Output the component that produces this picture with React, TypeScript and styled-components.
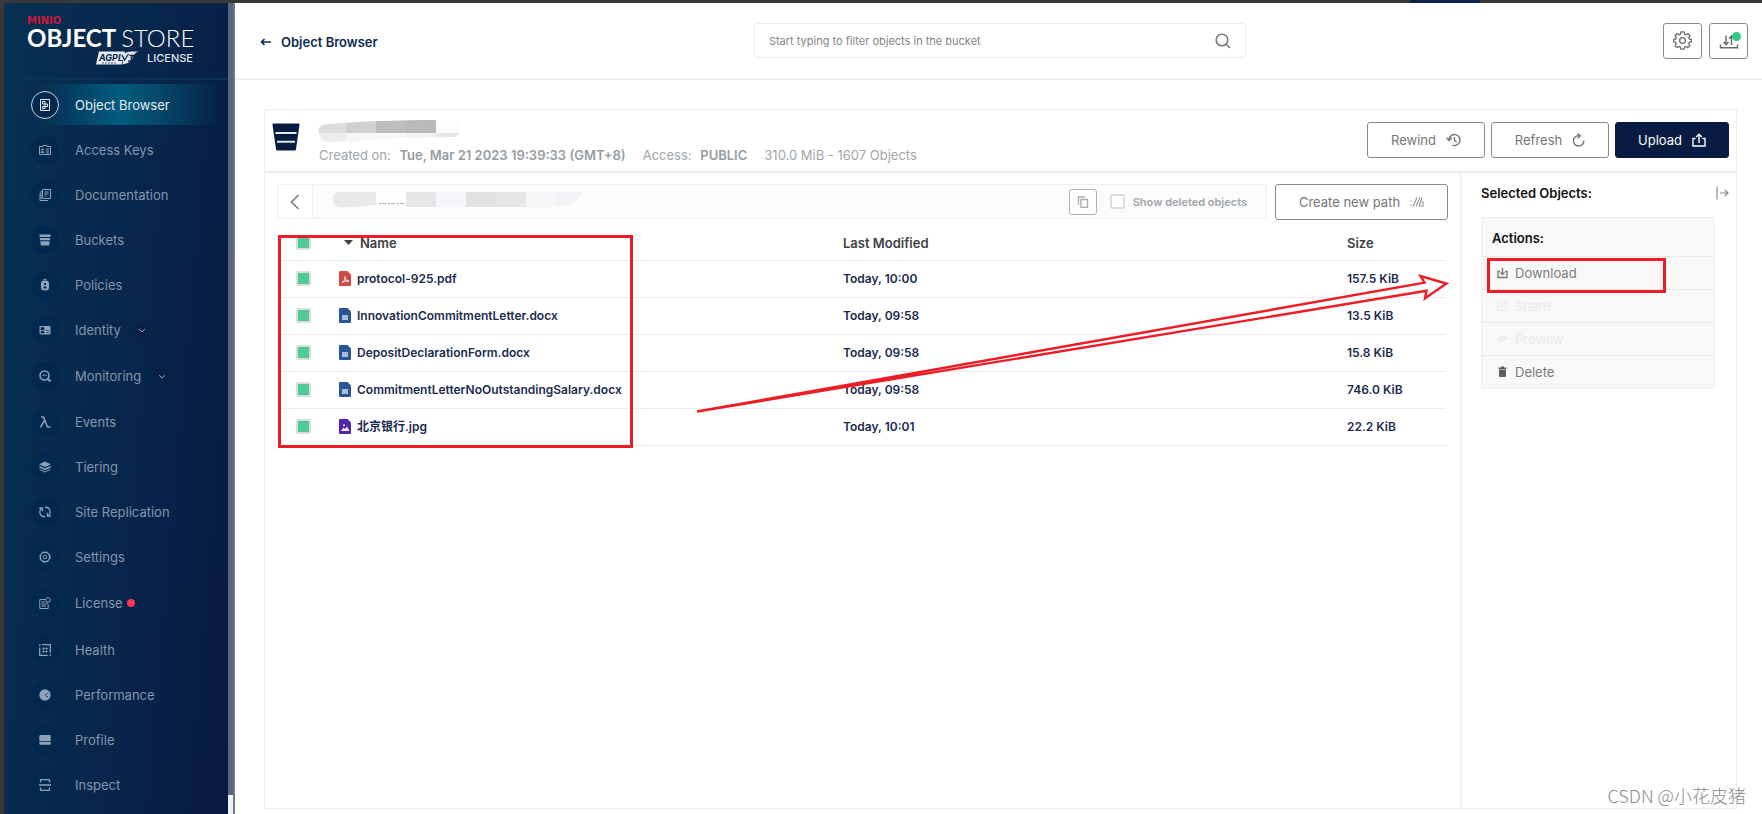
import React from "react";
import styled, { createGlobalStyle } from "styled-components";

const sans = `Inter, "Noto Sans CJK SC", sans-serif`;
const red = "#ee1c25";

const GlobalStyle = createGlobalStyle`
  *, *::before, *::after { box-sizing: border-box; }
  body { margin: 0; font-family: ${sans}; font-size: 13px; line-height: 16px; background: #fff; }
  button, input { font: inherit; }
  h1, h2, p, ul { margin: 0; padding: 0; font-size: inherit; font-weight: inherit; }
  a { color: inherit; text-decoration: none; }
`;

const Frame = styled.div`
  position: relative;
  display: flex;
  min-height: 100vh;
  padding: 3px 0 0 4px;
  background:
    linear-gradient(90deg, transparent 80%, #13214f 80% 84%, transparent 84%) 0 0 / 100% 3px no-repeat,
    #383838;
`;

/* ---------- sidebar ---------- */

const Sidebar = styled.aside`
  flex: none;
  width: 224px;
  background: linear-gradient(95deg, #073153, #07264c 50%, #081a42);
  color: #8396ab;
`;

const LogoLink = styled.a`
  display: block;
  height: 77px;
  padding: 12px 0 0 23px;
  border-bottom: 2px solid #0b3158;
  color: #fff;
  font-family: Lato, sans-serif;
`;

const Brand = styled.span`
  display: block;
  height: 12px;
  color: #c8193c;
  font: bold 10px/12px "DejaVu Sans", sans-serif;
`;

const Product = styled.span`
  display: flex;
  gap: 5px;
  font-size: 24px;
  font-weight: 300;
  line-height: 22px;
  strong { font-weight: 700; }
`;

const Licensing = styled.span`
  display: flex;
  align-items: center;
  gap: 8px;
  margin: 1px 0 0 69px;
  color: #dfe5ec;
  font: 500 11px/16px ${sans};
`;

const Menu = styled.ul`
  list-style: none;
  padding-top: 2px;
`;

const MenuItem = styled.li<{ $height: number }>`
  display: flex;
  align-items: center;
  height: ${(p) => p.$height}px;
`;

const MenuLink = styled.a<{ $active?: boolean }>`
  display: flex;
  align-items: center;
  gap: 16px;
  height: 41px;
  margin-left: 27px;
  flex: ${(p) => (p.$active ? "1" : "none")};
  background: ${(p) =>
    p.$active ? "linear-gradient(90deg, transparent 4%, #015c7f 45%, #044a6c 62%, transparent 96%)" : "none"};
  color: ${(p) => (p.$active ? "#e3edf3" : "inherit")};
`;

const IconCircle = styled.span<{ $active?: boolean }>`
  display: grid;
  place-items: center;
  width: 28px;
  height: 28px;
  border-radius: 50%;
  background: #01284e;
  border: 1px solid ${(p) => (p.$active ? "#c8d3de" : "#04264a")};
  color: ${(p) => (p.$active ? "#e3edf3" : "#8fa2b8")};
`;

const Expand = styled.button`
  display: grid;
  place-items: center;
  width: 14px;
  height: 14px;
  margin-left: 14px;
  padding: 0;
  border: 0;
  background: #0a1f45;
  color: #8fa2b8;
`;

const Alert = styled.span`
  width: 8px;
  height: 8px;
  margin-left: 4px;
  border-radius: 50%;
  background: #fb3552;
`;

const ScrollTrack = styled.div`
  flex: none;
  display: flex;
  align-items: flex-end;
  width: 7px;
  background: #5b637e;
  border-right: 2px solid #6f7790;
`;

const ScrollEnd = styled.div`
  width: 100%;
  height: 19px;
  background: #f2f2f4;
`;

/* ---------- header ---------- */

const Main = styled.main`
  flex: 1;
  min-width: 0;
  display: flex;
  flex-direction: column;
  background: #fff;
`;

const TopBar = styled.header`
  display: grid;
  grid-template-columns: 60fr 492px 61fr;
  align-items: center;
  height: 77px;
  padding: 0 14px 0 25px;
  border-bottom: 2px solid #efefef;
`;

const BackLink = styled.a`
  display: flex;
  align-items: center;
  gap: 9px;
  color: #0a2a4d;
  font-weight: 600;
  padding-top: 2px;
`;

const SearchBox = styled.label`
  display: flex;
  align-items: center;
  height: 35px;
  padding: 0 14px;
  border: 1px solid #eaedee;
  border-radius: 3px;
  color: #7b7b7b;
`;

const SearchInput = styled.input`
  flex: 1;
  min-width: 0;
  padding: 0;
  border: 0;
  outline: 0;
  background: none;
  font-size: 11px;
  &::placeholder { color: #858585; opacity: 1; }
`;

const IconButtons = styled.div`
  display: flex;
  justify-content: flex-end;
  gap: 7px;
`;

const SquareButton = styled.button`
  position: relative;
  display: grid;
  place-items: center;
  width: 39px;
  height: 36px;
  padding: 0;
  border: 1px solid #8b8b8b;
  border-radius: 3px;
  background: #fff;
  color: #6c6c6c;
`;

const Badge = styled.span`
  position: absolute;
  top: 8px;
  right: 6px;
  width: 9px;
  height: 9px;
  border-radius: 50%;
  background: #33c886;
`;

/* ---------- bucket panel ---------- */

const Panel = styled.section`
  flex: 1;
  display: flex;
  flex-direction: column;
  margin: 29px 25px 5px 29px;
  border: 1px solid #eeeeee;
`;

const BucketHeader = styled.div`
  display: flex;
  align-items: flex-start;
  height: 63px;
  padding: 10px 7px 0;
  border-bottom: 2px solid #eaeaea;
`;

const BucketGlyph = styled.span`
  display: grid;
  padding-top: 3px;
`;

const BucketInfo = styled.div`
  flex: 1;
  padding-left: 19px;
`;

const Facts = styled.p`
  display: flex;
  gap: 17px;
  margin-top: 2px;
  color: #a0a5aa;
  strong { margin-left: 5px; font-weight: 600; color: #969ca2; }
`;

const Actions = styled.div`
  display: flex;
  gap: 6px;
  padding-top: 2px;
`;

const Button = styled.button<{ $primary?: boolean; $width: number }>`
  display: flex;
  align-items: center;
  justify-content: center;
  gap: 10px;
  width: ${(p) => p.$width}px;
  height: 36px;
  padding: 0;
  border: 1px solid ${(p) => (p.$primary ? "#081c42" : "#8b8b8b")};
  border-radius: 3px;
  background: ${(p) => (p.$primary ? "#081c42" : "#fff")};
  color: ${(p) => (p.$primary ? "#fff" : "#767676")};
`;

const Columns = styled.div`
  flex: 1;
  display: flex;
`;

const ListArea = styled.div`
  position: relative;
  flex: 1;
  min-width: 0;
  padding: 11px 12px;
`;

const PathRow = styled.div`
  display: flex;
  gap: 8px;
`;

const PathBar = styled.div`
  flex: 1;
  display: flex;
  align-items: center;
  height: 35px;
  padding-right: 19px;
  border: 1px solid #f1f1f1;
  background: #fcfcfc;
`;

const BackButton = styled.button`
  display: grid;
  place-items: center;
  width: 35px;
  height: 33px;
  padding: 0;
  border: 0;
  border-right: 1px solid #f1f1f1;
  background: #fff;
  color: #7b7b7b;
`;

const PathName = styled.div`
  flex: 1;
  padding-left: 20px;
`;

const CopyButton = styled.button`
  display: grid;
  place-items: center;
  width: 28px;
  height: 26px;
  margin-right: 13px;
  padding: 0;
  border: 1px solid #aab4ba;
  border-radius: 3px;
  background: #fff;
  color: #a9adb0;
`;

const Deleted = styled.label`
  display: flex;
  align-items: center;
  gap: 8px;
  color: #a0a5aa;
  font-size: 11px;
  font-weight: 600;
`;

const Tick = styled.input.attrs({ type: "checkbox" })`
  appearance: none;
  display: block;
  width: 15px;
  height: 15px;
  margin: 0;
  border: 2px solid #dcdcdc;
  border-radius: 2px;
  background: #fff;
  &:checked { background: #4ccb92; }
`;

const Table = styled.table`
  width: calc(100% - 4px);
  margin: 3px 2px 0;
  border-collapse: collapse;
  table-layout: fixed;
  color: #1b2b50;
  font-size: 12px;
  font-weight: 600;
  th, td { height: 37px; padding: 0; border-bottom: 1px solid #ebebeb; text-align: left; }
  th { padding-top: 3px; color: #404143; font-size: 13px; font-weight: 600; }
  th:first-child, td:first-child { width: 60px; padding-left: 17px; }
  th:last-child, td:last-child { width: 99px; }
`;

const FileName = styled.a`
  display: flex;
  align-items: center;
  gap: 6px;
`;

const SortButton = styled.button`
  display: flex;
  align-items: center;
  gap: 7px;
  padding: 0 0 0 5px;
  border: 0;
  background: none;
  color: inherit;
`;

const SidePanel = styled.aside`
  flex: none;
  width: 276px;
  padding: 10px 7px 0 19px;
  border-left: 2px solid #f4f4f4;
`;

const SideHead = styled.div`
  display: flex;
  align-items: center;
  justify-content: space-between;
  height: 20px;
  color: #111;
  h2 { font-weight: 600; }
`;

const CloseButton = styled.button`
  display: grid;
  padding: 0;
  border: 0;
  background: none;
  color: #8b8b8b;
`;

const ActionBox = styled.div`
  margin: 14px 14px 0 0;
  border: 1px solid #f1f1f1;
  border-radius: 2px;
  background: #f8f8f8;
`;

const ActionTitle = styled.h2`
  height: 38px;
  padding: 0 10px;
  color: #111;
  font-weight: 600;
  line-height: 40px;
`;

const ActionSlot = styled.div`
  position: relative;
  border-top: 1px solid #e9e9e9;
`;

const ActionButton = styled.button`
  display: flex;
  align-items: center;
  gap: 7px;
  width: 100%;
  height: 32px;
  padding: 0 15px;
  border: 0;
  background: none;
  color: #7b7b7b;
  &:disabled { color: #ebebeb; }
`;

/* ---------- annotations over the page ---------- */

const ListMark = styled.div`
  position: absolute;
  top: 62px;
  left: 13px;
  width: 355px;
  height: 213px;
  border: 3px solid ${red};
  pointer-events: none;
`;

const DownloadMark = styled.div`
  position: absolute;
  top: 1px;
  left: 5px;
  width: 179px;
  height: 35px;
  border: 3px solid ${red};
  pointer-events: none;
  z-index: 1;
`;

const ArrowMark = styled.svg`
  position: absolute;
  top: 100px;
  right: 11px;
  pointer-events: none;
`;

const Watermark = styled.span`
  position: absolute;
  right: 16px;
  bottom: 7px;
  color: #8c8c8c;
  font: 300 18px/24px "Noto Sans CJK SC", sans-serif;
`;

/* ---------- icons ---------- */

const menuIcons: Record<string, React.ReactNode> = {
  browser: (
    <g fill="none" stroke="currentColor">
      <path d="M1.500 .5h9v11h-9z" />
      <path d="M3.500 2.500h2.500v2.500h-2.500zM6 5h2.500v2.500H6zM3.500 7.500h2.500v2h-2.500z" />
    </g>
  ),
  keys: (
    <g fill="none" stroke="currentColor">
      <path d="M.5 2.500h3.500v-1h4v1h3.500v8H.5z" />
      <path d="M2 8.500c0-2 3-2 3 0zM2.800 5h1.400v1H2.800zM7 5h3M7 7h3M7 9h3" />
    </g>
  ),
  docs: (
    <g fill="none" stroke="currentColor">
      <path d="M3.500 .5h8v9h-8zM3.500 2.500h-1.500v7.500M1 4v7.500h8M5.500 3h4M5.500 5h4M5.500 7h2" />
    </g>
  ),
  bucket: (
    <path fill="currentColor" d="M.3.500h11.400L11.400 3H.6zM.8 4h10.400l-.3 2.300H1.100zM1.300 7.300h9.400l-.6 4.200H1.900z" />
  ),
  policy: (
    <g>
      <rect x="2" y="1.500" width="8" height="10" rx="3" fill="currentColor" />
      <path d="M4.500 .5h3" stroke="currentColor" />
      <path d="M5 4h2v2H5zM4.500 7.500h3v2h-3z" fill="#01284e" />
    </g>
  ),
  identity: (
    <g>
      <rect x=".5" y="2" width="11" height="8.500" rx="1" fill="currentColor" />
      <path d="M2 3.500h3v2.500H2zM2 7.500h3v1.500H2zM7 6.500h3M7 8.500h3" fill="#01284e" stroke="#01284e" strokeWidth=".6" />
    </g>
  ),
  monitor: (
    <g fill="none" stroke="currentColor">
      <circle cx="5.500" cy="5.500" r="4.500" strokeWidth="1.600" />
      <path d="M8.500 8.500l3 3" strokeWidth="2" />
      <path d="M3.500 6l1.300-1.500 1.400 1.500L8 4.500" strokeWidth=".9" />
    </g>
  ),
  lambda: <path d="M2 .9h2.500l4 10.200H11.500M5.500 4.500L1.500 11.400" fill="none" stroke="currentColor" strokeWidth="1.500" />,
  tiers: (
    <g>
      <path d="M6 .5l5.800 2.700L6 6 .2 3.200z" fill="currentColor" />
      <path d="M.4 4.700L6 7.400l5.600-2.700v1.800L6 9.200.4 6.500z" fill="currentColor" />
      <path d="M.5 8.400L6 11l5.500-2.600" fill="none" stroke="currentColor" />
    </g>
  ),
  replicate: (
    <g fill="none" stroke="currentColor" strokeWidth="1.300">
      <path d="M4.500 11A5 5 0 0 1 2.500 2.500M7.500 1A5 5 0 0 1 9.500 9.500" />
      <path d="M.3 2h3.200v3.200M11.700 10H8.500V6.800M6 1.500h2M4 10.500h2" />
    </g>
  ),
  gear: (
    <g fill="none" stroke="currentColor">
      <circle cx="6" cy="6" r="4.600" strokeWidth="1.300" />
      <circle cx="6" cy="6" r="5.300" strokeDasharray="2 2.200" />
      <circle cx="6" cy="6" r="1.800" />
    </g>
  ),
  license: (
    <g fill="none" stroke="currentColor">
      <path d="M7 2.500H.8v9h8.400V7" />
      <circle cx="9" cy="3" r="2.300" />
      <path d="M2.500 5h3.500M2.500 7h4.500M2.500 9h4.500M8 5v2.500" />
    </g>
  ),
  health: (
    <g fill="none" stroke="currentColor">
      <path d="M.7 3.500v7.800h8M3 .7h8.300v8" strokeWidth="1.300" />
      <path d="M3 4.500h6M3 7.500h6M4.500 3v6M7.500 3v6" strokeWidth=".7" />
      <path d="M0 1h1.500M10.500 11h1.500" strokeWidth="1.500" />
    </g>
  ),
  performance: (
    <g>
      <circle cx="6" cy="6" r="5.700" fill="currentColor" />
      <path d="M5.500 6.500l4-2.500M7 7.500h2" stroke="#01284e" strokeWidth=".7" />
    </g>
  ),
  profile: (
    <g fill="currentColor">
      <rect x=".3" y="1" width="11.400" height="6.300" rx="1" />
      <path d="M.3 8h11.400v1.700a1 1 0 0 1-1 1H1.300a1 1 0 0 1-1-1z" />
    </g>
  ),
  inspect: (
    <g fill="none" stroke="currentColor" strokeWidth="1.300">
      <path d="M1.500 3.500v-2a1 1 0 0 1 1-1h7a1 1 0 0 1 1 1v2M1.500 8.500v2a1 1 0 0 0 1 1h7a1 1 0 0 0 1-1v-2M0 6h12" />
    </g>
  ),
};

const MenuIcon = ({ name }: { name: string }) => (
  <svg width="12" height="12" viewBox="0 0 12 12" aria-hidden="true">
    {menuIcons[name]}
  </svg>
);

const AgplMark = () => (
  <svg width="43" height="14" viewBox="0 0 43 14" aria-hidden="true">
    <path d="M3 .5h26L25.500 13.500H0z" fill="#e8ecf1" />
    <path d="M28 2.500c4-2.500 9-2 14.500-2-3 1-4 2-5 4.500-1.500 5-5 7.500-11 8.500z" fill="#dfe5ec" />
    <text x="3" y="10" fontFamily="Inter, sans-serif" fontSize="9" fontWeight="700" fontStyle="italic" fill="#0a2348">
      AGPL
    </text>
    <path d="M26 4l2.500 5 4-6M33.500 4.500h4l-2.500 2.500c2 1 0 3.500-3 3" fill="none" stroke="#0a2348" strokeWidth="1.300" />
    <path d="M6 12h15" stroke="#0a2348" strokeWidth=".7" strokeDasharray="2 1" />
  </svg>
);

const ArrowLeft = () => (
  <svg width="12" height="10" viewBox="0 0 12 10" fill="none" stroke="currentColor" strokeWidth="1.600" aria-hidden="true">
    <path d="M11 5H1.500M4.500 2L1.500 5l3 3" />
  </svg>
);

const SearchIcon = () => (
  <svg width="16" height="16" viewBox="0 0 16 16" fill="none" stroke="currentColor" strokeWidth="1.600" aria-hidden="true">
    <circle cx="7" cy="7" r="5.800" />
    <path d="M11.200 11.200l3.800 3.800" />
  </svg>
);

const GearIcon = () => (
  <svg width="19" height="19" viewBox="0 0 20 20" fill="none" stroke="currentColor" strokeWidth="1.400" strokeLinejoin="round" aria-hidden="true">
    <path d="M8.300 1h3.400l.5 2.300 1.500.7 2-1.300 2.200 2.300-1.300 2 .7 1.400 2.100.4v2.500l-2.200.6-.6 1.500 1.200 2-2.100 2.100-2-1.200-1.500.6-.5 2.200H8.300l-.5-2.200-1.500-.6-2 1.200-2.100-2.100 1.200-2-.6-1.500-2.200-.6V8.800l2.200-.4.6-1.400-1.200-2 2.100-2.300 2 1.300 1.500-.7z" />
    <circle cx="10" cy="10" r="3" />
  </svg>
);

const TransferIcon = () => (
  <svg width="20" height="16" viewBox="0 0 20 16" fill="none" stroke="currentColor" strokeWidth="1.500" aria-hidden="true">
    <path d="M1.500 11.500v3.200h17v-3.200M7 2.500v9M4.500 9L7 11.700 9.500 9M12.500 12V3.500M10 5.800L12.500 3 15 5.800" />
  </svg>
);

const BucketIcon = () => (
  <svg width="28" height="28" viewBox="0 0 28 28" aria-hidden="true">
    <path d="M1.500.5h25a1 1 0 0 1 1 1.200L24 26.300a1.500 1.500 0 0 1-1.500 1.200h-17A1.500 1.500 0 0 1 4 26.300L.5 1.700A1 1 0 0 1 1.500.5z" fill="#081c42" />
    <path d="M3.500 10h21M5 18.700h18" stroke="#e3e7ec" strokeWidth="1.900" />
  </svg>
);

const NameMosaic = () => (
  <svg width="141" height="22" viewBox="0 0 141 22" aria-hidden="true">
    <clipPath id="nameShape">
      <path d="M0 9Q1 4 9 4L45 1.500 100 0h40v14l-4 3-60 1-40 3Q16 22 10 22 1 21 0 14z" />
    </clipPath>
    <g clipPath="url(#nameShape)">
      <path fill="#dddddb" d="M0 0h27v13H0z" />
      <path fill="#d0d0d0" d="M27 0h30v13H27z" />
      <path fill="#bdbdbd" d="M57 0h30v13H57z" />
      <path fill="#bababa" d="M87 0h30v13H87z" />
      <path fill="#fdfdfd" d="M117 0h24v13h-24z" />
      <path fill="#ebeeed" d="M0 13h27v9H0z" />
      <path fill="#f5f6f7" d="M27 13h60v9H27z" />
      <path fill="#f0f2f4" d="M87 13h30v9H87z" />
      <path fill="#e4e8eb" d="M117 13h24v9h-24z" />
    </g>
  </svg>
);

const PathMosaic = () => (
  <svg width="248" height="16" viewBox="0 0 248 16" aria-hidden="true">
    <clipPath id="pathShape">
      <path d="M0 7Q0 0 7 0h241q-1 11-18 14l-12 1H73V11L43 13Q14 16 6 15 0 14 0 7z" />
    </clipPath>
    <g clipPath="url(#pathShape)">
      <path fill="#e8e9eb" d="M0 0h43v16H0z" />
      <path fill="#fefefe" d="M43 0h30v16H43z" />
      <path fill="#e6e7e9" d="M73 0h30v16H73z" />
      <path fill="#f5f6f9" d="M103 0h30v16h-30z" />
      <path fill="#e1e2e3" d="M133 0h30v16h-30z" />
      <path fill="#e5e6e8" d="M163 0h30v16h-30z" />
      <path fill="#f7f7f9" d="M193 0h30v16h-30z" />
      <path fill="#f2f3f6" d="M223 0h25v16h-25z" />
    </g>
    <path d="M46 11.500h26" stroke="#a9b3b9" strokeDasharray="2 1 4 2" />
  </svg>
);

const RewindIcon = () => (
  <svg width="15" height="14" viewBox="0 0 15 14" fill="none" stroke="currentColor" strokeWidth="1.400" aria-hidden="true">
    <path d="M3 6.500a5.500 5.500 0 1 1 3.500 5.700M.5 4.800L3 7.500l2.800-2.700M8.500 4v3.500l2.200 1.700" />
  </svg>
);

const RefreshIcon = () => (
  <svg width="13" height="14" viewBox="0 0 13 14" fill="none" stroke="currentColor" strokeWidth="1.400" aria-hidden="true">
    <path d="M11.800 7.500A5.200 5.200 0 1 1 7.500 2.700M5.500.6l2.800 2.200-2.500 2.500" />
  </svg>
);

const UploadIcon = () => (
  <svg width="14" height="14" viewBox="0 0 14 14" fill="none" stroke="currentColor" strokeWidth="1.400" aria-hidden="true">
    <path d="M3.500 5.500H1v7.500h12V5.500h-2.500M7 10V1.500M4.200 4L7 1.200 9.800 4" />
  </svg>
);

const NewPathIcon = () => (
  <svg width="14" height="10" viewBox="0 0 14 10" fill="none" stroke="#9a9a9a" aria-hidden="true">
    <path d="M1 3.500v1.200M1 7.800V9M3 9.500L7 .5M6 9.500L10 .5M9 9.500L12 .5M10 5h3v4H9.500" strokeWidth="1.200" />
  </svg>
);

const CloseIcon = () => (
  <svg width="13" height="14" viewBox="0 0 13 14" fill="none" stroke="currentColor" strokeWidth="1.200" aria-hidden="true">
    <path d="M1 .5v13M4 7h8M9 4l3 3-3 3" />
  </svg>
);

const fileColors = { pdf: "#d04a48", docx: "#2b5599", jpg: "#5127a8" };

const FileIcon = ({ kind }: { kind: keyof typeof fileColors }) => (
  <svg width="12" height="15" viewBox="0 0 12 15" aria-hidden="true">
    <path d="M1 0h7.500L12 3.500V14a1 1 0 0 1-1 1H1a1 1 0 0 1-1-1V1a1 1 0 0 1 1-1z" fill={fileColors[kind]} />
    {kind === "pdf" && (
      <path d="M3 11.500c2.500-1 3.500-4 3-6 0 3 1.500 4.500 4 4.500-3-.5-5 .5-7 1.500z" fill="none" stroke="#fff" strokeWidth=".9" />
    )}
    {kind === "docx" && <path d="M3 7h6v5H3z" fill="#a9bddd" />}
    {kind === "jpg" && <path d="M2 12l2.500-3.500L6 10l2-2.500 2.500 4.500zM4 5.500h2v1.500H4z" fill="#efe9fa" />}
  </svg>
);

const actionIcons = {
  Download: (
    <g fill="none" stroke="currentColor" strokeWidth="1.400">
      <path d="M3 4.500H1v6h9v-6H8M5.500 1v6.500M3.500 5.500l2 2 2-2" />
    </g>
  ),
  Share: (
    <g fill="none" stroke="currentColor" strokeWidth="1.200">
      <path d="M5 1.500H1v9h9V7M4 7.500C4 5 6 3.500 9.500 3.500M7.500 1l2.500 2.500L7.500 6" />
    </g>
  ),
  Preview: (
    <g>
      <path d="M.5 5.500Q5.500 0 10.500 5.500 5.500 11 .5 5.500z" fill="currentColor" />
      <circle cx="5.500" cy="5.500" r="1.200" fill="#f8f8f8" />
    </g>
  ),
  Delete: <path d="M1.500 1.500H4v-1h3v1h2.500V3h-8zM2 3.500h7V10a1 1 0 0 1-1 1H3a1 1 0 0 1-1-1z" fill="#5e5e5e" />,
};

/* ---------- data ---------- */

const menu: { label: string; icon: string; height?: number; expands?: boolean; alert?: boolean; active?: boolean }[] = [
  { label: "Object Browser", icon: "browser", active: true },
  { label: "Access Keys", icon: "keys" },
  { label: "Documentation", icon: "docs" },
  { label: "Buckets", icon: "bucket" },
  { label: "Policies", icon: "policy" },
  { label: "Identity", icon: "identity", height: 46, expands: true },
  { label: "Monitoring", icon: "monitor", height: 46, expands: true },
  { label: "Events", icon: "lambda" },
  { label: "Tiering", icon: "tiers" },
  { label: "Site Replication", icon: "replicate" },
  { label: "Settings", icon: "gear" },
  { label: "License", icon: "license", height: 48, alert: true },
  { label: "Health", icon: "health" },
  { label: "Performance", icon: "performance" },
  { label: "Profile", icon: "profile" },
  { label: "Inspect", icon: "inspect" },
];

const files: { name: string; kind: keyof typeof fileColors; modified: string; size: string }[] = [
  { name: "protocol-925.pdf", kind: "pdf", modified: "Today, 10:00", size: "157.5 KiB" },
  { name: "InnovationCommitmentLetter.docx", kind: "docx", modified: "Today, 09:58", size: "13.5 KiB" },
  { name: "DepositDeclarationForm.docx", kind: "docx", modified: "Today, 09:58", size: "15.8 KiB" },
  { name: "CommitmentLetterNoOutstandingSalary.docx", kind: "docx", modified: "Today, 09:58", size: "746.0 KiB" },
  { name: "北京银行.jpg", kind: "jpg", modified: "Today, 10:01", size: "22.2 KiB" },
];

const objectActions: { label: keyof typeof actionIcons; disabled?: boolean }[] = [
  { label: "Download" },
  { label: "Share", disabled: true },
  { label: "Preview", disabled: true },
  { label: "Delete" },
];

export default function App() {
  return (
    <Frame>
      <GlobalStyle />
      <Sidebar>
        <LogoLink href="#">
          <Brand>MINIO</Brand>
          <Product>
            <strong>OBJECT</strong> STORE
          </Product>
          <Licensing>
            <AgplMark />
            LICENSE
          </Licensing>
        </LogoLink>
        <nav>
          <Menu>
            {menu.map((m) => (
              <MenuItem key={m.label} $height={m.height ?? 45}>
                <MenuLink href="#" $active={m.active}>
                  <IconCircle $active={m.active}>
                    <MenuIcon name={m.icon} />
                  </IconCircle>
                  {m.label}
                </MenuLink>
                {m.expands && (
                  <Expand aria-label={`Expand ${m.label}`}>
                    <svg width="8" height="5" viewBox="0 0 8 5" fill="none" stroke="currentColor">
                      <path d="M1 1l3 3 3-3" />
                    </svg>
                  </Expand>
                )}
                {m.alert && <Alert />}
              </MenuItem>
            ))}
          </Menu>
        </nav>
      </Sidebar>
      <ScrollTrack>
        <ScrollEnd />
      </ScrollTrack>

      <Main>
        <TopBar>
          <BackLink href="#">
            <ArrowLeft />
            Object Browser
          </BackLink>
          <SearchBox>
            <SearchInput aria-label="Filter objects" placeholder="Start typing to filter objects in the bucket" />
            <SearchIcon />
          </SearchBox>
          <IconButtons>
            <SquareButton aria-label="Settings">
              <GearIcon />
            </SquareButton>
            <SquareButton aria-label="Transfers">
              <TransferIcon />
              <Badge />
            </SquareButton>
          </IconButtons>
        </TopBar>

        <Panel>
          <BucketHeader>
            <BucketGlyph>
              <BucketIcon />
            </BucketGlyph>
            <BucketInfo>
              <NameMosaic />
              <Facts>
                <span>
                  Created on: <strong>Tue, Mar 21 2023 19:39:33 (GMT+8)</strong>
                </span>
                <span>
                  Access: <strong>PUBLIC</strong>
                </span>
                <span>310.0 MiB - 1607 Objects</span>
              </Facts>
            </BucketInfo>
            <Actions>
              <Button $width={118}>
                Rewind <RewindIcon />
              </Button>
              <Button $width={118}>
                Refresh <RefreshIcon />
              </Button>
              <Button $width={114} $primary>
                Upload <UploadIcon />
              </Button>
            </Actions>
          </BucketHeader>

          <Columns>
            <ListArea>
              <PathRow>
                <PathBar>
                  <BackButton aria-label="Back">
                    <svg width="10" height="16" viewBox="0 0 10 16" fill="none" stroke="currentColor" strokeWidth="1.600">
                      <path d="M8.500 1L1.500 8l7 7" />
                    </svg>
                  </BackButton>
                  <PathName>
                    <PathMosaic />
                  </PathName>
                  <CopyButton aria-label="Copy path">
                    <svg width="12" height="12" viewBox="0 0 12 12" fill="none" stroke="currentColor" strokeWidth="1.400">
                      <path d="M4 3.500h6.500v8H4zM1.500 9V1H8" />
                    </svg>
                  </CopyButton>
                  <Deleted>
                    <Tick />
                    Show deleted objects
                  </Deleted>
                </PathBar>
                <Button $width={173}>
                  Create new path <NewPathIcon />
                </Button>
              </PathRow>

              <Table>
                <thead>
                  <tr>
                    <th>
                      <Tick defaultChecked aria-label="Select all" />
                    </th>
                    <th>
                      <SortButton>
                        <svg width="9" height="5" viewBox="0 0 9 5" aria-hidden="true">
                          <path d="M0 0h9L4.500 5z" fill="currentColor" />
                        </svg>
                        Name
                      </SortButton>
                    </th>
                    <th>Last Modified</th>
                    <th>Size</th>
                  </tr>
                </thead>
                <tbody>
                  {files.map((f) => (
                    <tr key={f.name}>
                      <td>
                        <Tick defaultChecked aria-label={`Select ${f.name}`} />
                      </td>
                      <td>
                        <FileName href="#">
                          <FileIcon kind={f.kind} />
                          {f.name}
                        </FileName>
                      </td>
                      <td>{f.modified}</td>
                      <td>{f.size}</td>
                    </tr>
                  ))}
                </tbody>
              </Table>
              <ListMark />
              <ArrowMark width="754" height="142" viewBox="0 0 754 142" fill="none" stroke={red} strokeWidth="2.400" aria-hidden="true">
                <path d="M2 138.500L729.500 9.700 725.500 3l26 7.500L730 25.300l1.500-7.500z" />
              </ArrowMark>
            </ListArea>

            <SidePanel>
              <SideHead>
                <h2>Selected Objects:</h2>
                <CloseButton aria-label="Close panel">
                  <CloseIcon />
                </CloseButton>
              </SideHead>
              <ActionBox>
                <ActionTitle>Actions:</ActionTitle>
                {objectActions.map((a) => (
                  <ActionSlot key={a.label}>
                    <ActionButton disabled={a.disabled}>
                      <svg width="11" height="12" viewBox="0 0 11 12" aria-hidden="true">
                        {actionIcons[a.label]}
                      </svg>
                      {a.label}
                    </ActionButton>
                    {a.label === "Download" && <DownloadMark />}
                  </ActionSlot>
                ))}
              </ActionBox>
            </SidePanel>
          </Columns>
        </Panel>
      </Main>
      <Watermark>CSDN @小花皮猪</Watermark>
    </Frame>
  );
}
